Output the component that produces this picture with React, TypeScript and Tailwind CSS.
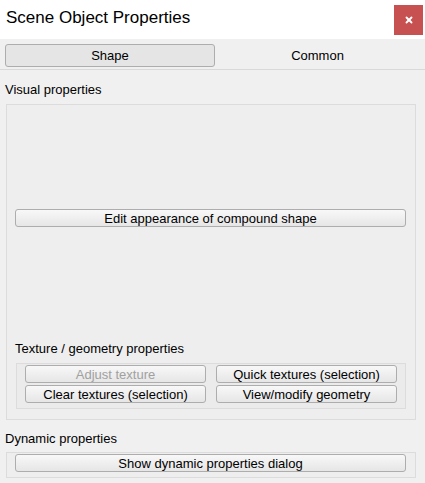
import { X } from 'lucide-react';

const btn =
  'flex items-center justify-center rounded-[3px] border border-[#adadad] bg-gradient-to-b from-[#f8f8f8] to-[#e6e6e6] text-[13px] leading-none';

export default function App() {
  return (
    <div
      className="flex h-[483px] w-[425px] flex-col overflow-hidden bg-[#f0f0f0] text-black"
      style={{ fontFamily: '"Liberation Sans", Arial, sans-serif' }}
    >
      {/* Title bar */}
      <div className="flex h-[39px] shrink-0 items-start justify-between bg-white">
        <div className="pl-[6px] pt-[7px] text-[17px] leading-[22px]">Scene Object Properties</div>
        <button
          type="button"
          className="mr-[2px] mt-[5px] flex h-[30px] w-[29px] items-center justify-center bg-[#c75050] text-white"
        >
          <X className="h-[10px] w-[10px]" strokeWidth={4.5} />
        </button>
      </div>

      {/* Tabs */}
      <div className="flex shrink-0 px-[5px] pt-[5px]">
        <div className="flex h-[23px] w-[210px] items-center justify-center rounded-[3px] border border-[#adadad] bg-[#e5e5e5] text-[13px]">
          Shape
        </div>
        <div className="flex h-[23px] flex-1 items-center justify-center text-[13px]">Common</div>
      </div>
      <div className="mt-[2px] h-px shrink-0 bg-[#d9d9d9]" />

      {/* Visual properties */}
      <div className="mt-[12px] pl-[5px] text-[13px] leading-[15px]">Visual properties</div>
      <div className="ml-[6px] mt-[7px] flex h-[316px] w-[410px] shrink-0 flex-col border border-[#dcdcdc] bg-[#eeeeee]">
        <div className="mx-[8px] mt-[104px]">
          <div className={`${btn} h-[18px] w-[391px] text-black`}>Edit appearance of compound shape</div>
        </div>
        <div className="ml-[8px] mt-[114px] text-[13px] leading-[15px]">Texture / geometry properties</div>
        <div className="ml-[9px] mt-[7px] flex h-[46px] w-[390px] flex-col gap-[2px] border border-[#dcdcdc] bg-[#ebebeb] pl-[8px] pt-[1px]">
          <div className="flex gap-[10px]">
            <div className={`${btn} h-[18px] w-[181px] text-[#a0a0a0]`}>Adjust texture</div>
            <div className={`${btn} h-[18px] w-[181px] text-black`}>Quick textures (selection)</div>
          </div>
          <div className="flex gap-[10px]">
            <div className={`${btn} h-[18px] w-[181px] text-black`}>Clear textures (selection)</div>
            <div className={`${btn} h-[18px] w-[181px] text-black`}>View/modify geometry</div>
          </div>
        </div>
      </div>

      {/* Dynamic properties */}
      <div className="mt-[11px] pl-[5px] text-[13px] leading-[15px]">Dynamic properties</div>
      <div className="ml-[6px] mt-[6px] h-[26px] w-[410px] shrink-0 border border-[#dcdcdc] bg-[#eeeeee] pl-[8px] pt-[1px]">
        <div className={`${btn} h-[18px] w-[391px] text-black`}>Show dynamic properties dialog</div>
      </div>
    </div>
  );
}
